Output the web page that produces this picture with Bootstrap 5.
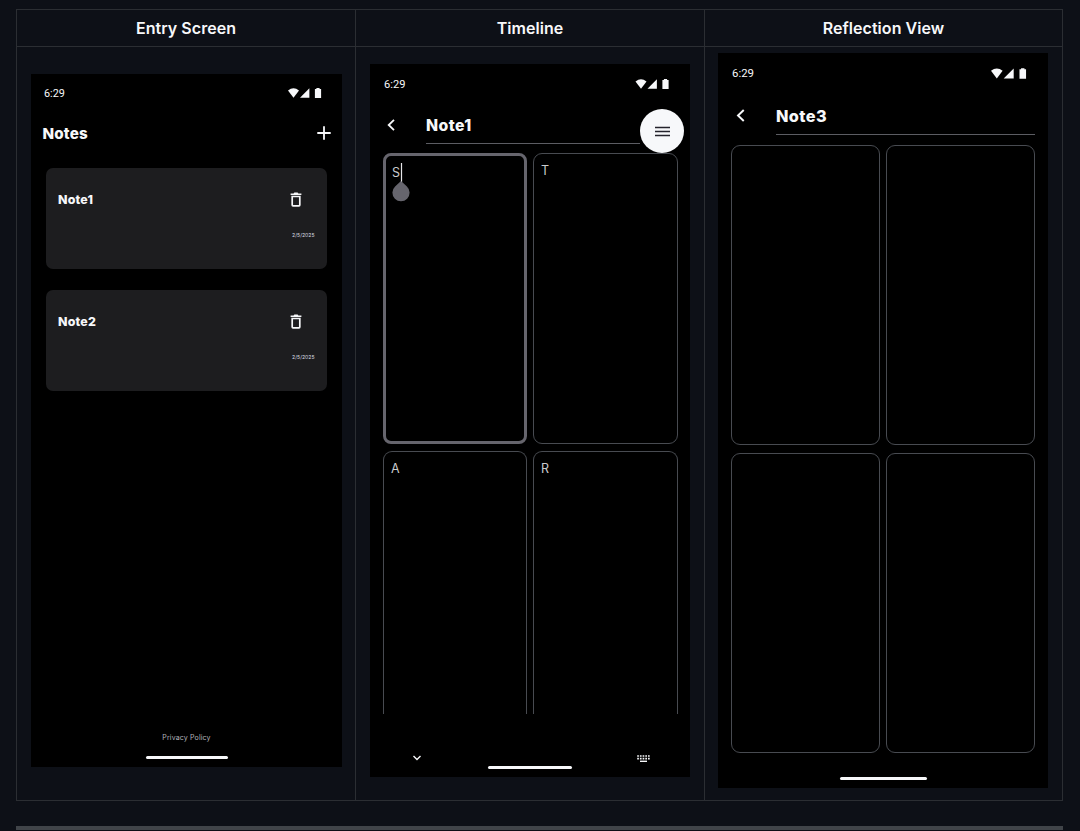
<!DOCTYPE html>
<html lang="en">
<head>
<meta charset="utf-8">
<meta name="viewport" content="width=device-width, initial-scale=1">
<title>Notes app screens</title>
<link href="https://cdn.jsdelivr.net/npm/bootstrap@5.3.0/dist/css/bootstrap.min.css" rel="stylesheet">
<style>
  :root { --line: #2b2e33; --outline: #484b51; }
  body { background: #0d1017; color: #f7f8fa; font-family: Inter, "Liberation Sans", sans-serif; overflow: hidden; line-height: 1; }
  svg { display: block; flex: none; overflow: visible; }
  .shots { width: 1047px; margin: 9px 0 0 16px; grid-template-columns: 339px 349px 358px; grid-template-rows: 37px 754px; border-right: 1px solid var(--line); border-bottom: 1px solid var(--line); }
  .shots > * { border-top: 1px solid var(--line); border-left: 1px solid var(--line); min-width: 0; }
  .shots h2 { font-size: 16px; font-weight: 600; line-height: 36px; margin: 0; letter-spacing: .05px; }
  .rule { width: 1047px; height: 4px; margin: 25px 0 0 16px; background: #404449; }
  .phone { background: #000; position: relative; }
  .phone-a { width: 311px; height: 693px; margin: 27px 0 0 14px; }
  .phone-b { width: 320px; height: 713px; margin: 17px 0 0 14px; }
  .phone-c { width: 330px; height: 735px; margin: 6px 0 0 13px; }
  .clock { font-family: Roboto, sans-serif; padding-top: 2px; }
  .phone-a .status { height: 38px; padding: 0 20px 0 13px; font-size: 10.8px; }
  .phone-b .status { height: 40px; padding: 0 20px 0 14px; font-size: 11.1px; }
  .phone-c .status { height: 41px; padding: 0 21px 0 14px; font-size: 11.4px; }
  .phone-c .clock { padding-top: 0; }
  .heading { font-weight: 800; }
  .phone-a .heading { font-size: 15.2px; height: 42px; padding: 0 11px 0 11.5px; letter-spacing: .15px; }
  .phone-a .heading span { padding-top: 1px; }
  .note { background: #1d1d1f; border-radius: 7px; height: 101px; margin: 0 15px 21px; padding: 24px 12.5px 0 12px; }
  .note strong { font-size: 12.4px; font-weight: 800; line-height: 15px; letter-spacing: .2px; }
  .note svg { margin-right: 13px; }
  .note time { font-size: 5.1px; color: #dcdde0; margin-top: 25px; line-height: 6px; }
  .policy { font-size: 7px; color: #b4b6bc; letter-spacing: .14px; line-height: 9px; margin-bottom: 14px; }
  .homebar { height: 3px; border-radius: 2px; background: #f7f8fa; }
  .title-field { border-bottom: 1px solid #5c5d63; font-weight: 800; letter-spacing: .4px; }
  .pane { border: 1px solid var(--outline); border-radius: 9px; color: #c9cacd; font-size: 12.5px; }
  .pane.active { border: 3px solid #66656d; border-radius: 8px; }
  .panes-b { grid-template-columns: 144px 145px; grid-template-rows: 291px 270px; column-gap: 6px; row-gap: 7px; height: 561px; margin: 9px 12px 0 13px; overflow: hidden; }
  .panes-b .pane { padding: 11px 7px; }
  .panes-b .pane.active { padding: 11px 6px; }
  .panes-c { grid-template-columns: 149px 149px; grid-template-rows: 300px 300px; column-gap: 6px; row-gap: 8px; margin: 10px 12px 0 13px; }
  .fab { position: absolute; left: 270px; top: 45px; width: 44px; height: 44px; background: #f7f8fa; border-radius: 50%; z-index: 2; }
  .caret-mark { position: absolute; left: 22px; top: 99px; }
</style>
</head>
<body>
<svg width="0" height="0" class="position-absolute">
  <defs>
    <symbol id="signals" viewBox="0 0 34 10">
      <path d="M0 2.4Q5.5-1.9 11 2.4L5.5 9.8Z"/>
      <path d="M12 9.8 21.4.3V9.8Z"/>
      <path d="M26.9 1.1h1.5V0h3.2v1.1h1.5V10h-6.2z"/>
    </symbol>
    <symbol id="back" viewBox="0 0 8 12"><path d="M7 .9 1.7 6 7 11.1" fill="none" stroke="currentColor" stroke-width="1.8"/></symbol>
    <symbol id="bin" viewBox="0 0 12 15">
      <path d="M.6 1.5h3L4.4.4h3.2l.8 1.1h3v1.6H.6z"/>
      <path d="M2.2 4.5h7.6v8.6q0 .8-.8.8H3q-.8 0-.8-.8z" fill="none" stroke="currentColor" stroke-width="1.7"/>
    </symbol>
  </defs>
</svg>
<main>
  <div class="shots d-grid">
    <h2 class="text-center">Entry Screen</h2>
    <h2 class="text-center">Timeline</h2>
    <h2 class="text-center">Reflection View</h2>

    <section>
      <div class="phone phone-a d-flex flex-column">
        <div class="status d-flex justify-content-between align-items-center">
          <span class="clock">6:29</span>
          <svg width="34" height="10" fill="currentColor"><use href="#signals"/></svg>
        </div>
        <div class="heading d-flex justify-content-between align-items-center">
          <span>Notes</span>
          <svg width="14" height="14" viewBox="0 0 14 14" stroke="currentColor" stroke-width="1.8"><path d="M7 .3v13.4M.3 7h13.4"/></svg>
        </div>
        <div class="d-flex flex-column" style="padding-top:14px">
          <article class="note d-flex flex-column">
            <div class="d-flex justify-content-between"><strong>Note1</strong><svg width="12" height="15" fill="currentColor"><use href="#bin"/></svg></div>
            <time class="align-self-end">2/5/2025</time>
          </article>
          <article class="note d-flex flex-column">
            <div class="d-flex justify-content-between"><strong>Note2</strong><svg width="12" height="15" fill="currentColor"><use href="#bin"/></svg></div>
            <time class="align-self-end">2/5/2025</time>
          </article>
        </div>
        <div class="policy mt-auto text-center">Privacy Policy</div>
        <div class="homebar" style="width:82px;margin:0 0 8px 114.5px"></div>
      </div>
    </section>

    <section>
      <div class="phone phone-b d-flex flex-column">
        <div class="status d-flex justify-content-between align-items-center">
          <span class="clock">6:29</span>
          <svg width="35" height="10" fill="currentColor"><use href="#signals"/></svg>
        </div>
        <div class="d-flex" style="height:40px;padding:0 50px 0 17px">
          <svg width="8" height="12" style="margin:15px 31px 0 0"><use href="#back"/></svg>
          <div class="title-field flex-grow-1" style="font-size:15.8px;line-height:43px">Note1</div>
        </div>
        <div class="panes-b d-grid">
          <div class="pane active">S</div>
          <div class="pane">T</div>
          <div class="pane border-bottom-0 rounded-bottom-0">A</div>
          <div class="pane border-bottom-0 rounded-bottom-0">R</div>
        </div>
        <div class="d-flex justify-content-between" style="padding:41px 40px 0 43px">
          <svg width="8" height="6" viewBox="0 0 8 6" fill="none" stroke="currentColor" stroke-width="1.4"><path d="M.5 1 4 4.5 7.5 1"/></svg>
          <svg width="13" height="8" viewBox="0 0 13 8" stroke="currentColor" fill="none"><path d="M.2 1h12.6M.2 3.6h12.6" stroke-width="1.7" stroke-dasharray="1.7 1"/><path d="M3 6.3h7" stroke-width="1.4"/></svg>
        </div>
        <div class="homebar mx-auto mt-auto" style="width:84px;margin-bottom:8px"></div>
        <div class="fab d-flex align-items-center justify-content-center">
          <svg width="15" height="11" viewBox="0 0 15 11" stroke="#24232c" stroke-width="1.5"><path d="M0 1.5h15M0 5.5h15M0 9.5h15"/></svg>
        </div>
        <svg class="caret-mark" width="18" height="39" viewBox="0 0 18 39"><path d="M9.5 0v19" stroke="#e5e5e8" stroke-width="1.2"/><path d="M9 18 14.9 23.4A8.6 8.6 0 1 1 3.1 23.4Z" fill="#66656d"/></svg>
      </div>
    </section>

    <section>
      <div class="phone phone-c d-flex flex-column">
        <div class="status d-flex justify-content-between align-items-center">
          <span class="clock">6:29</span>
          <svg width="36" height="11" fill="currentColor"><use href="#signals"/></svg>
        </div>
        <div class="d-flex" style="height:41px;padding:0 13px 0 18px">
          <svg width="9" height="13" style="margin:15px 31px 0 0"><use href="#back"/></svg>
          <div class="title-field flex-grow-1" style="font-size:16.3px;line-height:44px">Note3</div>
        </div>
        <div class="panes-c d-grid">
          <div class="pane"></div><div class="pane"></div><div class="pane"></div><div class="pane"></div>
        </div>
        <div class="homebar mx-auto mt-auto" style="width:87px;margin-bottom:8px"></div>
      </div>
    </section>
  </div>
  <div class="rule"></div>
</main>
<script src="https://cdn.jsdelivr.net/npm/bootstrap@5.3.0/dist/js/bootstrap.bundle.min.js"></script>
</body>
</html>
